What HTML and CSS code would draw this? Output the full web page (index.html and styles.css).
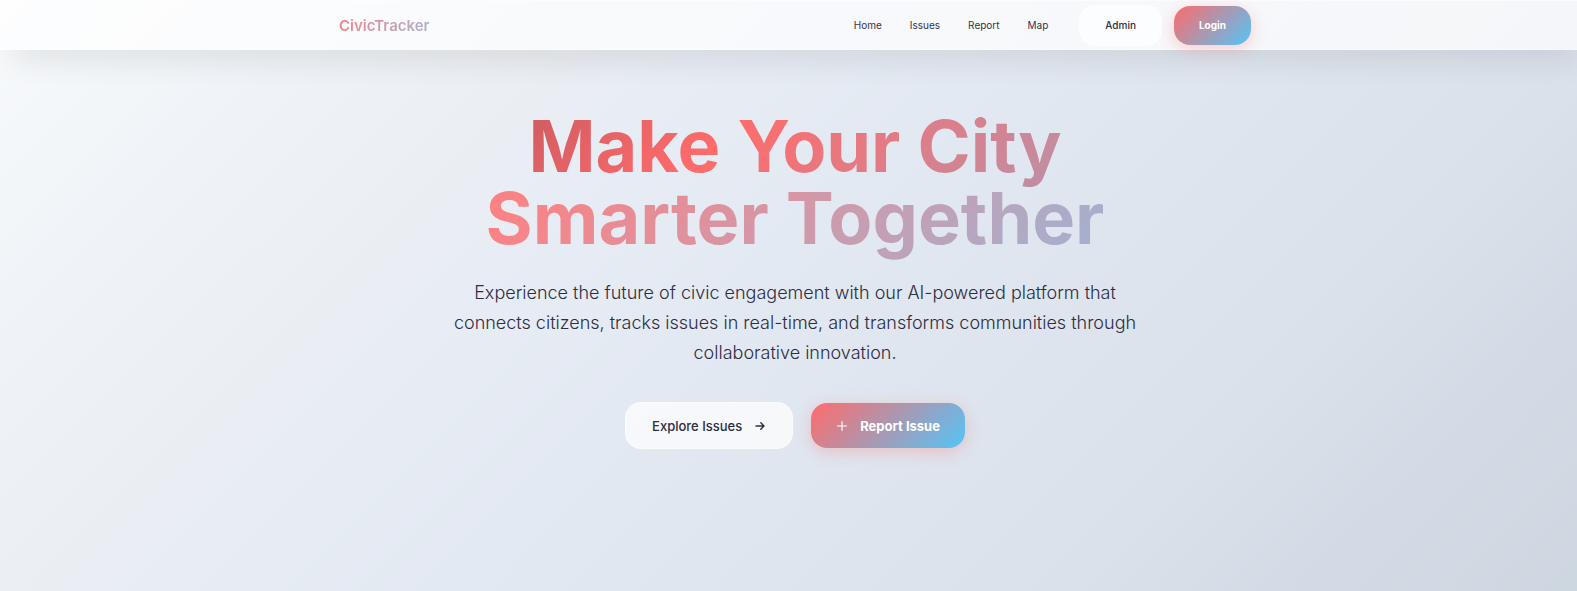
FILE: index.html
```html
<!DOCTYPE html>
<html lang="en">
<head>
<meta charset="utf-8">
<meta name="viewport" content="width=device-width, initial-scale=1">
<title>CivicTracker</title>
<link rel="stylesheet" href="styles.css">
</head>
<body>
<div class="page">
  <header class="header">
    <div class="header-inner">
      <a class="brand" href="#">CivicTracker</a>
      <nav class="nav">
        <a class="nav-link" href="#">Home</a>
        <a class="nav-link" href="#">Issues</a>
        <a class="nav-link" href="#">Report</a>
        <a class="nav-link" href="#">Map</a>
      </nav>
      <div class="account">
        <button class="btn btn-glass btn-small btn-admin" type="button">Admin</button>
        <button class="btn btn-primary btn-small" type="button">Login</button>
      </div>
    </div>
  </header>
  <main class="hero">
    <h1 class="title">
      <span class="title-line title-warm">Make Your City</span>
      <span class="title-line title-cool">Smarter Together</span>
    </h1>
    <p class="lead">Experience the future of civic engagement with our AI-powered platform that connects citizens, tracks issues in real-time, and transforms communities through collaborative innovation.</p>
    <div class="actions">
      <button class="btn btn-glass" type="button">Explore Issues
        <svg class="icon" viewBox="0 0 12 12" fill="none" stroke="currentColor" stroke-width="1.4" stroke-linecap="round" stroke-linejoin="round" aria-hidden="true"><path d="M2 6h8M6.8 2.8 10 6 6.8 9.2"/></svg>
      </button>
      <button class="btn btn-primary" type="button">
        <svg class="icon" viewBox="0 0 12 12" fill="none" stroke="currentColor" stroke-width="1.1" stroke-linecap="round" aria-hidden="true"><path d="M6 1.5v9M1.5 6h9"/></svg>
        Report Issue
      </button>
    </div>
  </main>
</div>
</body>
</html>
```
FILE: styles.css
```css
* {
  box-sizing: border-box;
}

body {
  margin: 0;
  overflow: hidden;
  font-family: Inter, "Liberation Sans", sans-serif;
  color: #2d2d44;
}

.page {
  min-height: 100vh;
  margin-right: -13px;
  background: linear-gradient(135deg, #f8fafb 0%, #f0f4f8 14%, #ebeef2 27%, #e8edf5 34%, #dfe6ef 58%, #dae1ea 76%, #d4dae5 87%, #cdd7e0 100%);
}

.header {
  height: 50px;
  padding: 0 24px;
  background: rgba(255, 255, 255, 0.7);
  border-top: 1px solid rgba(255, 255, 255, 0.7);
  border-bottom: 1px solid rgba(255, 255, 255, 0.4);
  box-shadow: 0 20px 32px -12px rgba(0, 0, 0, 0.11);
}

.header-inner {
  display: flex;
  align-items: center;
  height: 100%;
  max-width: 912px;
  margin: 0 auto;
}

.brand {
  margin-right: auto;
  font-size: 15px;
  font-weight: 600;
  text-decoration: none;
  color: transparent;
  background: linear-gradient(135deg, #fa7f82, #a5b4d6);
  background-clip: text;
}

.nav {
  display: flex;
  gap: 28px;
  margin-right: 31px;
}

.nav-link {
  font-size: 10px;
  color: #33334a;
  text-decoration: none;
}

.account {
  display: flex;
  align-items: center;
  gap: 12px;
}

.btn {
  display: flex;
  align-items: center;
  gap: 12px;
  height: 45px;
  padding: 0 26px;
  border: 0;
  border-radius: 16px;
  font-family: inherit;
  font-size: 13px;
  font-weight: 500;
  white-space: nowrap;
  cursor: pointer;
}

.btn-glass {
  height: 47px;
  color: #2d2d44;
  background: rgba(255, 255, 255, 0.7);
  border: 1px solid rgba(255, 255, 255, 0.5);
}

.btn-primary {
  padding: 0 25px;
  color: #fff;
  font-weight: 700;
  background: linear-gradient(135deg, #ff6b6b, #54c5f8);
  box-shadow: 0 4px 16px rgba(255, 107, 107, 0.3);
}

.btn-small {
  height: 39px;
  padding: 0 25px;
  font-size: 10px;
}

.btn-admin {
  height: 41px;
}

.icon {
  width: 12px;
  height: 12px;
}

.hero {
  display: flex;
  flex-direction: column;
  align-items: center;
  padding: 60px 24px;
}

.title {
  display: flex;
  flex-direction: column;
  align-items: center;
  margin: 0;
  font-size: 72px;
  line-height: 72px;
  font-weight: 700;
}

.title-line {
  padding-bottom: 8px;
  margin-bottom: -8px;
  color: transparent;
  background-clip: text;
}

.title-warm {
  background-image: linear-gradient(135deg, #cf5c61 0%, #ff6b6b 36%, #bc90a6 100%);
}

.title-cool {
  background-image: linear-gradient(135deg, #fb8082 0%, #fa8386 8%, #a0b2d2 100%);
}

.lead {
  max-width: 700px;
  margin: 24px 0 0;
  font-size: 18px;
  line-height: 30px;
  font-weight: 300;
  text-align: center;
}

.actions {
  display: flex;
  align-items: center;
  gap: 18px;
  margin-top: 34px;
}
```
